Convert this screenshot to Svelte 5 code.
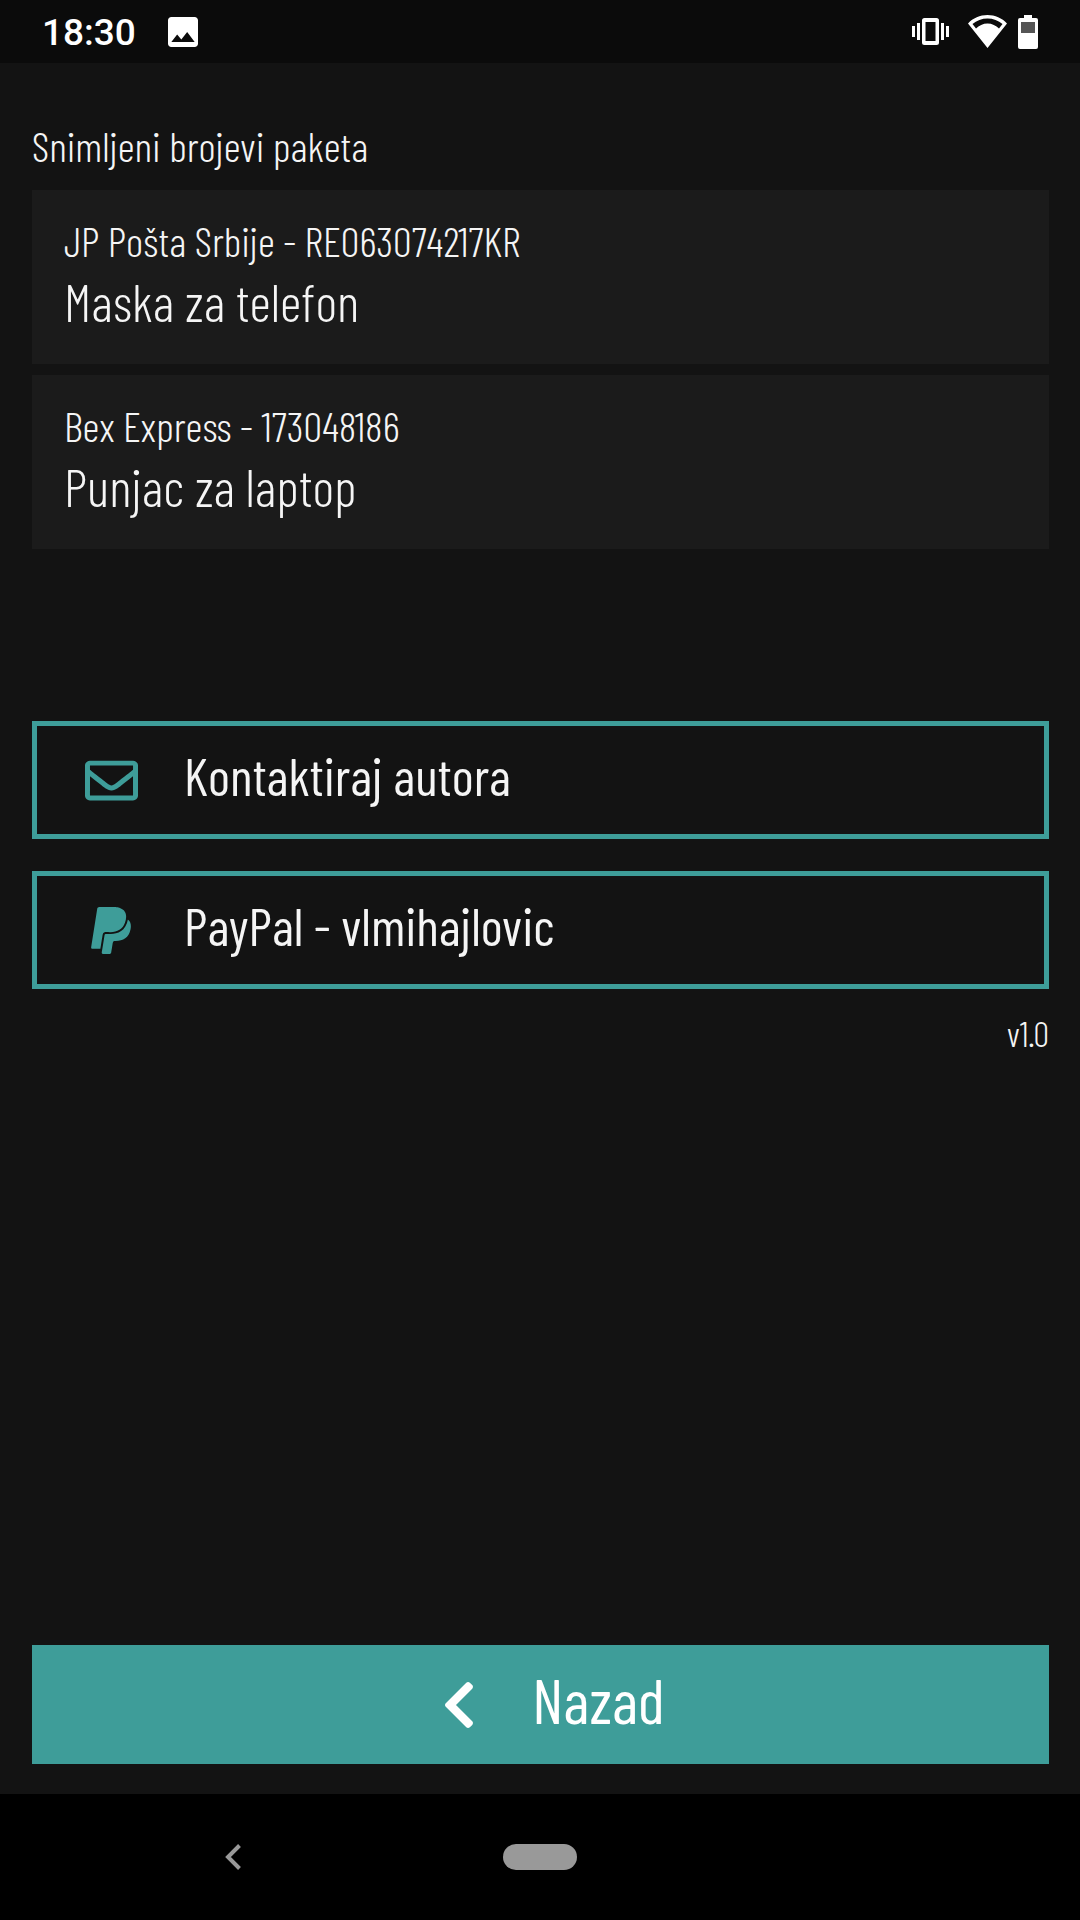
<script lang="ts">
    type Parcel = { courier:string, code:string, name:string }

    const time = "18:30"
    const version = "v1.0"
    const parcels:Parcel[] = [
        { courier: "JP Pošta Srbije", code: "RE063074217KR", name: "Maska za telefon" },
        { courier: "Bex Express", code: "173048186", name: "Punjac za laptop" },
    ]
</script>

<div class="screen">
    <!-- System status bar -->
    <header class="status">
        <span class="time">{time}</span>
        <svg class="picture" viewBox="3 3 18 18" aria-hidden="true">
            <path d="M21 19V5c0-1.100-.9-2-2-2H5c-1.100 0-2 .9-2 2v14c0 1.100.9 2 2 2h14c1.100 0 2-.9 2-2zM8.500 13.500l2.500 3.010L14.500 12l4.500 6H5l3.500-4.500z" />
        </svg>
        <div class="indicators">
            <svg class="vibrate" viewBox="0 0 37 27" aria-hidden="true">
                <path d="M0 8h3v11H0zM5 5h3v17H5zM29 5h3v17h-3zM34 8h3v11h-3z" />
                <path fill-rule="evenodd" d="M12.500 0h12a2.500 2.500 0 0 1 2.500 2.500v22a2.500 2.500 0 0 1-2.500 2.500h-12a2.500 2.500 0 0 1-2.500-2.500v-22A2.500 2.500 0 0 1 12.500 0zM13.500 4v19h10V4z" />
            </svg>
            <svg class="wifi" viewBox="0 0 39 33" aria-hidden="true">
                <path fill-rule="evenodd" d="M0 8.500C5 3 12 0 19.500 0S34 3 39 8.500L19.500 33zM4.500 9l3.500 4.500C11 10.500 15 8.500 19.500 8.500S28 10.500 31 13.500L34.500 9C30.500 5.500 25 3.500 19.500 3.500S8.500 5.500 4.500 9z" />
            </svg>
            <svg class="battery" viewBox="0 0 20 34" aria-hidden="true">
                <path d="M6 0h8v3h4a2 2 0 0 1 2 2v27a2 2 0 0 1-2 2H2a2 2 0 0 1-2-2V5a2 2 0 0 1 2-2h4z" />
                <path class="drained" d="M3 7h14v11H3z" />
            </svg>
        </div>
    </header>

    <main>
        <h1>Snimljeni brojevi paketa</h1>
        <ul class="parcels">
            {#each parcels as parcel}
                <li>
                    <span class="code">{parcel.courier} - {parcel.code}</span>
                    <span class="name">{parcel.name}</span>
                </li>
            {/each}
        </ul>

        <div class="links">
            <a class="outlined" href="#kontakt">
                <svg class="envelope" viewBox="0 0 512 512" aria-hidden="true">
                    <path d="M464 64H48C21.490 64 0 85.490 0 112v288c0 26.510 21.490 48 48 48h416c26.510 0 48-21.490 48-48V112c0-26.510-21.490-48-48-48zm0 48v40.805c-22.422 18.259-58.168 46.651-134.587 106.490-16.841 13.247-50.201 45.072-73.413 44.701-23.208.375-56.579-31.459-73.413-44.701C106.180 199.465 70.425 171.067 48 152.805V112h416zM48 400V214.398c22.914 18.251 55.409 43.862 104.938 82.646 21.857 17.205 60.134 55.186 103.062 54.955 42.717.231 80.509-37.199 103.053-54.947 49.528-38.783 82.032-64.401 104.947-82.653V400H48z" />
                </svg>
                <span>Kontaktiraj autora</span>
            </a>
            <a class="outlined" href="#paypal">
                <svg class="paypal" viewBox="0 0 384 512" aria-hidden="true">
                    <path d="M111.400 295.900c-3.500 19.200-17.400 108.700-21.500 134-.3 1.800-1 2.500-3 2.500H12.300c-7.600 0-13.100-6.600-12.100-13.900L58.800 46.600c1.500-9.600 10.100-16.900 20-16.900 152.300 0 165.100-3.700 204 11.400 60.100 23.300 65.600 79.500 44 140.300-21.500 62.600-72.500 89.500-140.100 90.300-43.400.7-69.500-7-75.300 24.200zM357.100 152c-1.800-1.300-2.500-1.800-3 1.300-2 11.400-5.100 22.500-8.800 33.600-39.900 113.800-150.500 103.900-204.500 103.900-6.100 0-10.100 3.300-10.900 9.400-22.600 140.400-27.100 169.700-27.100 169.700-1 7.100 3.500 12.900 10.600 12.900h63.500c8.600 0 15.700-6.300 17.400-14.900.7-5.400-1.100 6.100 14.400-91.300 4.600-22 14.300-19.700 29.300-19.700 71 0 126.400-28.800 142.900-112.300 6.500-34.800 4.600-71.400-23.800-92.600z" />
                </svg>
                <span>PayPal - vlmihajlovic</span>
            </a>
        </div>
        <p class="version">{version}</p>

        <button class="back" type="button">
            <svg viewBox="0 0 320 512" aria-hidden="true">
                <path d="M34.520 239.030L228.870 44.690c9.370-9.370 24.570-9.370 33.940 0l22.670 22.670c9.360 9.360 9.370 24.520.04 33.900L131.490 256l154.020 154.750c9.340 9.380 9.320 24.540-.04 33.900l-22.670 22.670c-9.370 9.370-24.570 9.370-33.940 0L34.520 272.970c-9.370-9.370-9.370-24.570 0-33.940z" />
            </svg>
            <span>Nazad</span>
        </button>
    </main>

    <!-- System navigation bar -->
    <nav>
        <button class="nav-back" type="button" aria-label="Back">
            <svg viewBox="0 0 16 26" aria-hidden="true">
                <path d="M14.500 1.500L3 13l11.500 11.500" />
            </svg>
        </button>
        <button class="nav-home" type="button" aria-label="Home"></button>
        <span></span>
    </nav>
</div>

<style>
    :global(body){
        background-color: #131313;
    }
    .screen{
        --accent: #3e9d99;
        min-height: 100vh;
        display: flex;
        flex-direction: column;
        background-color: #131313;
        color: #f5f5f5;
        font-family: "Barlow Condensed", "Roboto Condensed", "Liberation Sans Narrow", Roboto, sans-serif;
        font-weight: 300;
    }
    svg{
        display: block;
        flex: none;
        fill: currentColor;
    }
    button{
        border: none;
        padding: 0;
        font: inherit;
        color: inherit;
        cursor: pointer;
    }
    /* Status bar */
    .status{
        display: flex;
        align-items: center;
        height: 63px;
        padding: 0 42px;
        box-sizing: border-box;
        background-color: #0b0b0b;
        color: white;
    }
    .time{
        padding-top: 2px;
        font-family: Roboto, sans-serif;
        font-size: 37px;
        font-weight: 500;
    }
    .picture{
        width: 30px;
        height: 30px;
        margin-left: 32px;
    }
    .indicators{
        display: flex;
        align-items: center;
        margin-left: auto;
    }
    .vibrate{
        width: 37px;
        height: 27px;
        margin-right: 19px;
    }
    .wifi{
        width: 39px;
        height: 33px;
        margin-right: 11px;
    }
    .battery{
        width: 20px;
        height: 34px;
    }
    .drained{
        fill: #555;
    }
    /* Content */
    main{
        flex: 1;
        display: flex;
        flex-direction: column;
        padding: 55px 31px 30px 32px;
    }
    h1{
        margin: 0 0 18px;
        font-size: 42px;
        line-height: 54px;
        font-weight: 300;
    }
    .parcels{
        list-style: none;
        margin: 0;
        padding: 0;
        display: flex;
        flex-direction: column;
        gap: 11px;
    }
    .parcels li{
        display: flex;
        flex-direction: column;
        padding: 23px 32px 29px;
        background-color: #1b1b1b;
    }
    .code{
        font-size: 42px;
        line-height: 54px;
    }
    .name{
        font-size: 53px;
        line-height: 68px;
    }
    .links{
        display: flex;
        flex-direction: column;
        gap: 32px;
        margin-top: 172px;
    }
    .outlined{
        display: flex;
        align-items: center;
        height: 108px;
        padding: 0 48px;
        border: 5px solid var(--accent);
        color: inherit;
        font-size: 53px;
        font-weight: 400;
        line-height: 68px;
        text-decoration: none;
    }
    .outlined span{
        padding-bottom: 10px;
    }
    .outlined svg{
        color: var(--accent);
    }
    .envelope{
        width: 53px;
        height: 53px;
        margin-right: 46px;
    }
    .paypal{
        width: 40px;
        height: 53px;
        margin: 0 53px 0 6px;
    }
    .version{
        margin: 22px 0 0;
        font-size: 35px;
        line-height: 44px;
        text-align: right;
    }
    .back{
        display: flex;
        align-items: center;
        justify-content: center;
        gap: 56px;
        height: 119px;
        margin-top: auto;
        padding-left: 26px;
        background-color: var(--accent);
        color: white;
        font-size: 63px;
        font-weight: 400;
        line-height: 76px;
    }
    .back span{
        padding-bottom: 12px;
    }
    .back svg{
        width: 34px;
        height: 54px;
    }
    /* Navigation bar */
    nav{
        display: grid;
        grid-template-columns: 1fr 74px 1fr;
        align-items: center;
        height: 126px;
        background-color: black;
        color: #999;
    }
    .nav-back{
        justify-self: center;
        margin-right: 38px;
        background: none;
        padding: 12px;
    }
    .nav-back svg{
        width: 16px;
        height: 26px;
        fill: none;
        stroke: currentColor;
        stroke-width: 4;
    }
    .nav-home{
        height: 26px;
        border-radius: 13px;
        background-color: currentColor;
    }
</style>
